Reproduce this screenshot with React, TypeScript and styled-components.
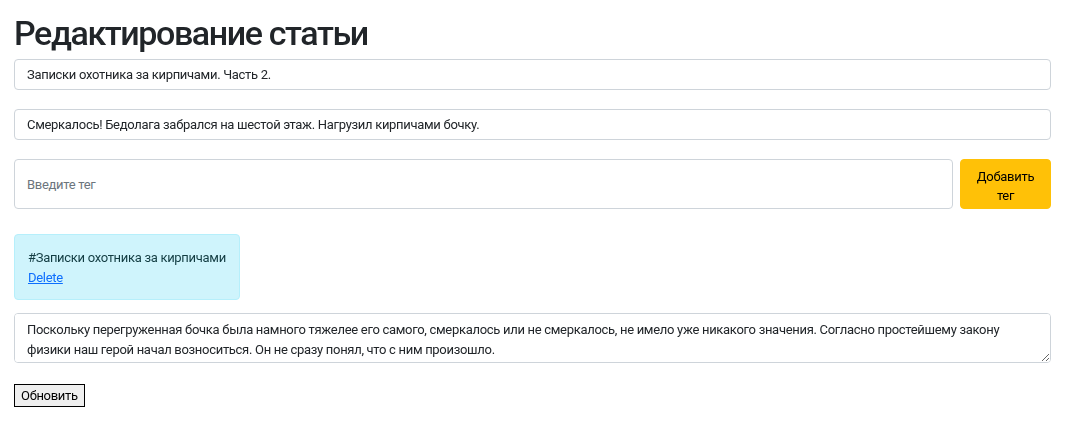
import React, { useState } from "react";
import styled, { createGlobalStyle } from "styled-components";

const GlobalStyle = createGlobalStyle`
  body {
    margin: 0;
    background: #fff;
    font-family: Roboto, "Liberation Sans", sans-serif;
    color: #212529;
  }
  * { box-sizing: border-box; }
`;

const Page = styled.div`
  padding: 0 28px 16px 14px;
  font-size: 13px;
  letter-spacing: -0.3px;
`;

const Heading = styled.h1`
  margin: 11px 0 3px;
  font-size: 34px;
  line-height: 45px;
  font-weight: 500;
  letter-spacing: -1.4px;
  color: #212529;
`;

const Field = styled.input<{ $tall?: boolean }>`
  display: block;
  width: 100%;
  height: ${(p) => (p.$tall ? "50px" : "31px")};
  margin-bottom: ${(p) => (p.$tall ? "0" : "19px")};
  padding: 4px 12px;
  font: inherit;
  letter-spacing: inherit;
  color: #212529;
  background: #fff;
  border: 1px solid #ced4da;
  border-radius: 4px;
  outline: none;
  &::placeholder {
    color: #6c757d;
  }
`;

const TagRow = styled.div`
  display: flex;
  gap: 7px;
  align-items: stretch;
`;

const AddButton = styled.button`
  flex: 0 0 91px;
  height: 50px;
  padding: 6px 12px 2px;
  font: inherit;
  letter-spacing: inherit;
  line-height: 19px;
  color: #000;
  background: #ffc107;
  border: 1px solid #ffc107;
  border-radius: 4px;
  cursor: pointer;
`;

const TagCard = styled.div`
  width: fit-content;
  margin-top: 25px;
  padding: 13px 13px 11px;
  line-height: 20px;
  color: #123c42;
  background: #cff4fc;
  border: 1px solid #b6effb;
  border-radius: 4px;
`;

const DeleteLink = styled.a`
  display: block;
  color: #0d6efd;
  text-decoration: underline;
  cursor: pointer;
`;

const Body = styled.textarea`
  display: block;
  width: 100%;
  height: 50px;
  margin-top: 13px;
  padding: 6px 12px 4px;
  font: inherit;
  letter-spacing: inherit;
  line-height: 20px;
  color: #212529;
  border: 1px solid #ced4da;
  border-radius: 4px;
  outline: none;
`;

const SubmitButton = styled.button`
  display: block;
  margin-top: 21px;
  height: 23px;
  padding: 0 6px;
  font: inherit;
  letter-spacing: inherit;
  color: #000;
  background: #efefef;
  border: 1px solid #000;
  border-radius: 0;
`;

const App: React.FC = () => {
  const [title, setTitle] = useState("Записки охотника за кирпичами. Часть 2.");
  const [lead, setLead] = useState(
    "Смеркалось! Бедолага забрался на шестой этаж. Нагрузил кирпичами бочку."
  );
  const [tag, setTag] = useState("");
  const [tags, setTags] = useState<string[]>(["Записки охотника за кирпичами"]);
  const [text, setText] = useState(
    "Поскольку перегруженная бочка была намного тяжелее его самого, смеркалось или не смеркалось, не имело уже никакого значения. Согласно простейшему закону физики наш герой начал возноситься. Он не сразу понял, что с ним произошло."
  );

  const addTag = () => {
    if (!tag.trim()) return;
    setTags([...tags, tag.trim()]);
    setTag("");
  };

  return (
    <Page>
      <GlobalStyle />
      <Heading>Редактирование статьи</Heading>
      <Field value={title} onChange={(e) => setTitle(e.target.value)} />
      <Field value={lead} onChange={(e) => setLead(e.target.value)} />
      <TagRow>
        <Field
          $tall
          placeholder="Введите тег"
          value={tag}
          onChange={(e) => setTag(e.target.value)}
        />
        <AddButton onClick={addTag}>Добавить тег</AddButton>
      </TagRow>
      {tags.map((t, i) => (
        <TagCard key={i}>
          #{t}
          <DeleteLink onClick={() => setTags(tags.filter((_, j) => j !== i))}>
            Delete
          </DeleteLink>
        </TagCard>
      ))}
      <Body value={text} onChange={(e) => setText(e.target.value)} />
      <SubmitButton>Обновить</SubmitButton>
    </Page>
  );
};

export default App;
